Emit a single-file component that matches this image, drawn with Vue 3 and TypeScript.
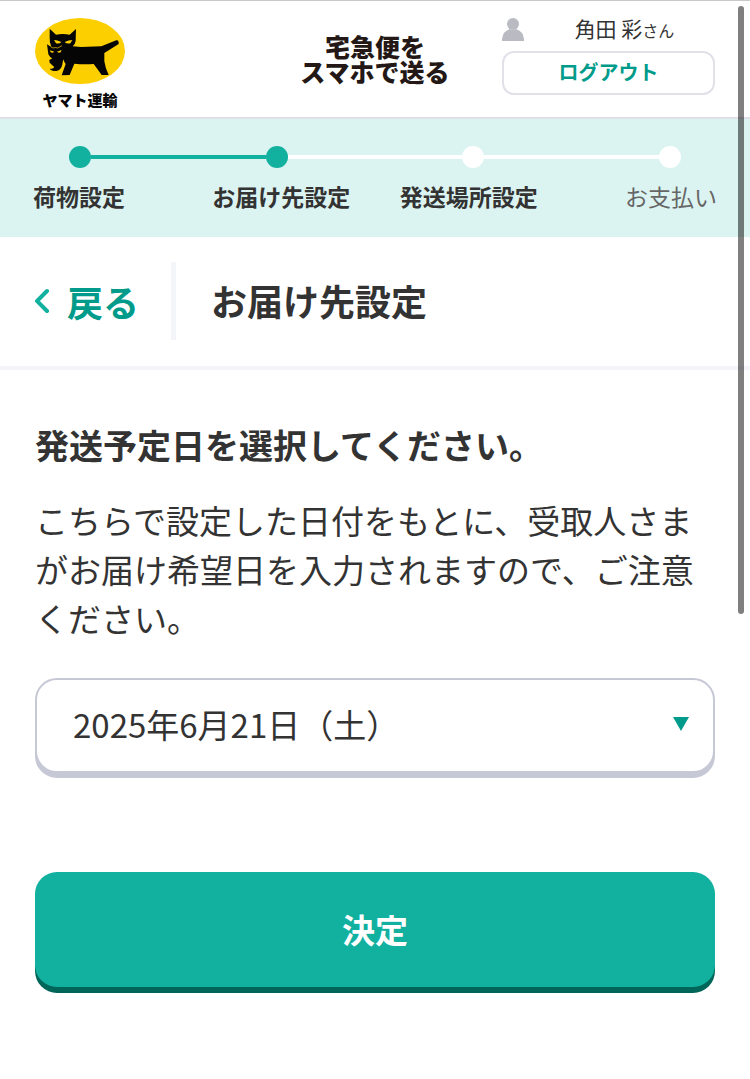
<script setup lang="ts">
import { ref } from 'vue'

interface Step {
  label: string
  reached: boolean
  upcoming?: boolean
}

const steps: Step[] = [
  { label: '荷物設定', reached: true },
  { label: 'お届け先設定', reached: true },
  { label: '発送場所設定', reached: false },
  { label: 'お支払い', reached: false, upcoming: true },
]

const dates: string[] = ['2025年6月21日（土）', '2025年6月22日（日）', '2025年6月23日（月）']
const shipDate = ref<string>(dates[0])
</script>

<template>
  <div class="page">
    <header class="header">
      <a class="brand" href="#">
        <svg class="brand-mark" viewBox="45 54 270 198" aria-hidden="true">
          <ellipse cx="180" cy="153" rx="135" ry="99" fill="#fccf00" />
          <path
            fill="#050505"
            d="M89 86 L108 104 Q128 100 149 104 L168 87 L167 122 Q166 132 158 139 L184 141 L244 139 L289 121 Q297 119 296 132 L253 159 L253 184 Q256 205 266 225 L245 225 Q233 208 221 192 Q190 194 163 191 L149 225 L125 226 L137 192 Q132 188 131 178 Q128 184 127 194 Q123 210 110 213 Q94 214 89 206 Q103 206 102 200 Q95 194 89 188 L88 180 L97 175 Q84 168 84 155 L81 133 L94 141 Q88 126 89 112 Z"
          />
          <path
            fill="#fccf00"
            d="M102 120 Q112 120 124 126 Q119 132 108 130 Z M157 120 Q146 120 134 126 Q139 132 151 130 Z M90 151 L103 155 Q98 160 92 157 Z M125 150 L111 155 Q116 160 122 157 Z"
          />
          <path fill="none" stroke="#fccf00" stroke-width="2" d="M93 141 L99 144 Q107 141 113 144 L126 137" />
        </svg>
        <span class="brand-name">ヤマト運輸</span>
      </a>
      <p class="service">
        <span>宅急便を</span>
        <span>スマホで送る</span>
      </p>
      <div class="account">
        <div class="user">
          <svg class="user-icon" viewBox="0 0 22 23" aria-hidden="true">
            <circle cx="11" cy="6" r="6" />
            <path d="M0 23 V21 Q1 13 8 11 Q11 13 14 11 Q21 13 22 21 V23 Z" />
          </svg>
          <span class="user-name">角田 彩<small>さん</small></span>
        </div>
        <button class="logout" type="button">ログアウト</button>
      </div>
    </header>

    <nav class="progress" aria-label="手続きの進捗">
      <div class="track" aria-hidden="true">
        <template v-for="(step, i) in steps" :key="step.label">
          <span v-if="i > 0" class="line" :class="{ reached: step.reached }"></span>
          <span class="dot" :class="{ reached: step.reached }"></span>
        </template>
      </div>
      <ol class="labels">
        <li v-for="step in steps" :key="step.label" :class="{ upcoming: step.upcoming }">
          {{ step.label }}
        </li>
      </ol>
    </nav>

    <div class="title-bar">
      <a class="back" href="#">
        <svg class="chevron" viewBox="0 0 15 26" aria-hidden="true">
          <path d="M12 3 L2 13 L12 23" />
        </svg>
        戻る
      </a>
      <h1>お届け先設定</h1>
    </div>

    <main class="content">
      <h2 id="date-heading">発送予定日を選択してください。</h2>
      <p class="note">
        こちらで設定した日付をもとに、受取人さまがお届け希望日を入力されますので、ご注意ください。
      </p>
      <div class="select-box">
        <select v-model="shipDate" aria-labelledby="date-heading">
          <option v-for="date in dates" :key="date" :value="date">{{ date }}</option>
        </select>
        <svg class="arrow" viewBox="0 0 16 14" aria-hidden="true"><path d="M0 0 H16 L8 14 Z" /></svg>
      </div>
      <button class="submit" type="button">決定</button>
    </main>
    <div class="scroll-thumb" aria-hidden="true"></div>
  </div>
</template>

<style>
body {
  margin: 0;
  background: #fff;
}
</style>

<style scoped>
.page {
  position: relative;
  border-top: 1px solid #c8c8c8;
  color: #333;
  font-family: 'Noto Sans CJK JP', sans-serif;
}
button,
select {
  font-family: inherit;
}
a {
  text-decoration: none;
}
h1,
h2,
p,
ol {
  margin: 0;
  padding: 0;
}
.header {
  display: grid;
  grid-template-columns: 1fr auto 1fr;
  align-items: start;
  padding: 17px 35px 22px;
  border-bottom: 2px solid #e0e1e8;
}
.brand {
  display: flex;
  flex-direction: column;
  align-items: center;
  gap: 6px;
  width: 90px;
  color: #050505;
}
.brand-mark {
  width: 90px;
  height: 66px;
}
.brand-name {
  font-size: 15px;
  line-height: 20px;
  font-weight: 900;
  height: 5px;
  white-space: nowrap;
}
.service {
  padding-top: 16px;
  color: #231815;
  font-size: 25px;
  line-height: 25px;
  font-weight: 900;
  text-align: center;
}
.service span {
  display: block;
}
.account {
  justify-self: end;
  width: 213px;
}
.user {
  display: flex;
  align-items: center;
  height: 23px;
  margin-bottom: 10px;
}
.user-icon {
  width: 22px;
  height: 23px;
  fill: #b9bac2;
}
.user-name {
  flex: 1;
  padding: 0 0 2px 10px;
  font-size: 21px;
  line-height: 22px;
  text-align: center;
  white-space: nowrap;
}
.user-name small {
  font-size: 16px;
}
.logout {
  display: block;
  width: 100%;
  height: 44px;
  padding: 0 0 2px;
  border: 2px solid #e0e1e9;
  border-radius: 12px;
  background: #fff;
  color: #009b8a;
  font-size: 20px;
  line-height: 28px;
  font-weight: 700;
}
.progress {
  padding: 27px 0 25px;
  background: #dcf4f1;
}
.track {
  display: flex;
  align-items: center;
  padding: 0 69px;
}
.dot {
  width: 22px;
  height: 22px;
  border-radius: 50%;
  background: #fff;
}
.line {
  flex: 1;
  height: 4px;
  background: #fff;
}
.reached {
  background: #12b09f;
}
.labels {
  display: grid;
  grid-template-columns: repeat(4, 1fr);
  padding-top: 12px;
  list-style: none;
  font-size: 23px;
  line-height: 32px;
  font-weight: 700;
  text-align: center;
  white-space: nowrap;
}
.labels li:first-child {
  padding-left: 33px;
  text-align: left;
}
.labels li:last-child {
  padding-right: 33px;
  text-align: right;
}
.labels .upcoming {
  color: #666;
  font-weight: 400;
}
.title-bar {
  display: flex;
  padding: 25px 35px 26px;
  border-bottom: 4px solid #f4f5f8;
  line-height: 76px;
}
.back {
  display: flex;
  align-items: center;
  gap: 17px;
  height: 78px;
  padding-right: 32px;
  border-right: 5px solid #f4f5f8;
  color: #009b8a;
  font-size: 36px;
  font-weight: 700;
}
.chevron {
  width: 15px;
  height: 26px;
  fill: none;
  stroke: #12b09f;
  stroke-width: 4;
  stroke-linecap: round;
}
h1 {
  padding-left: 35px;
  font-size: 36px;
  line-height: 76px;
  font-weight: 700;
}
.content {
  padding: 51px 35px 86px;
}
h2 {
  font-size: 34px;
  line-height: 48px;
  font-weight: 700;
}
.note {
  padding: 27px 0 35px;
  font-size: 33px;
  line-height: 49px;
}
.select-box {
  display: grid;
  align-items: center;
}
.select-box > * {
  grid-area: 1 / 1;
}
select {
  width: 100%;
  height: 95px;
  padding: 0 60px 4px 36px;
  border: 2px solid #c7c8d6;
  border-radius: 22px;
  box-shadow: 0 5px 0 #c7c8d6;
  appearance: none;
  background: #fff;
  color: #333;
  font-size: 33px;
}
.arrow {
  justify-self: end;
  width: 16px;
  height: 14px;
  margin: 0 26px 3px 0;
  fill: #009b8a;
  pointer-events: none;
}
.submit {
  display: block;
  width: 100%;
  height: 115px;
  margin-top: 99px;
  padding: 0 0 2px;
  border: 0;
  border-radius: 22px;
  box-shadow: 0 6px 0 #00665a;
  background: #12b09f;
  color: #fff;
  font-size: 33px;
  font-weight: 700;
}
.scroll-thumb {
  position: absolute;
  top: 5px;
  right: 6px;
  width: 6px;
  height: 608px;
  border-radius: 3px;
  background: rgba(0, 0, 0, 0.5);
}
</style>
